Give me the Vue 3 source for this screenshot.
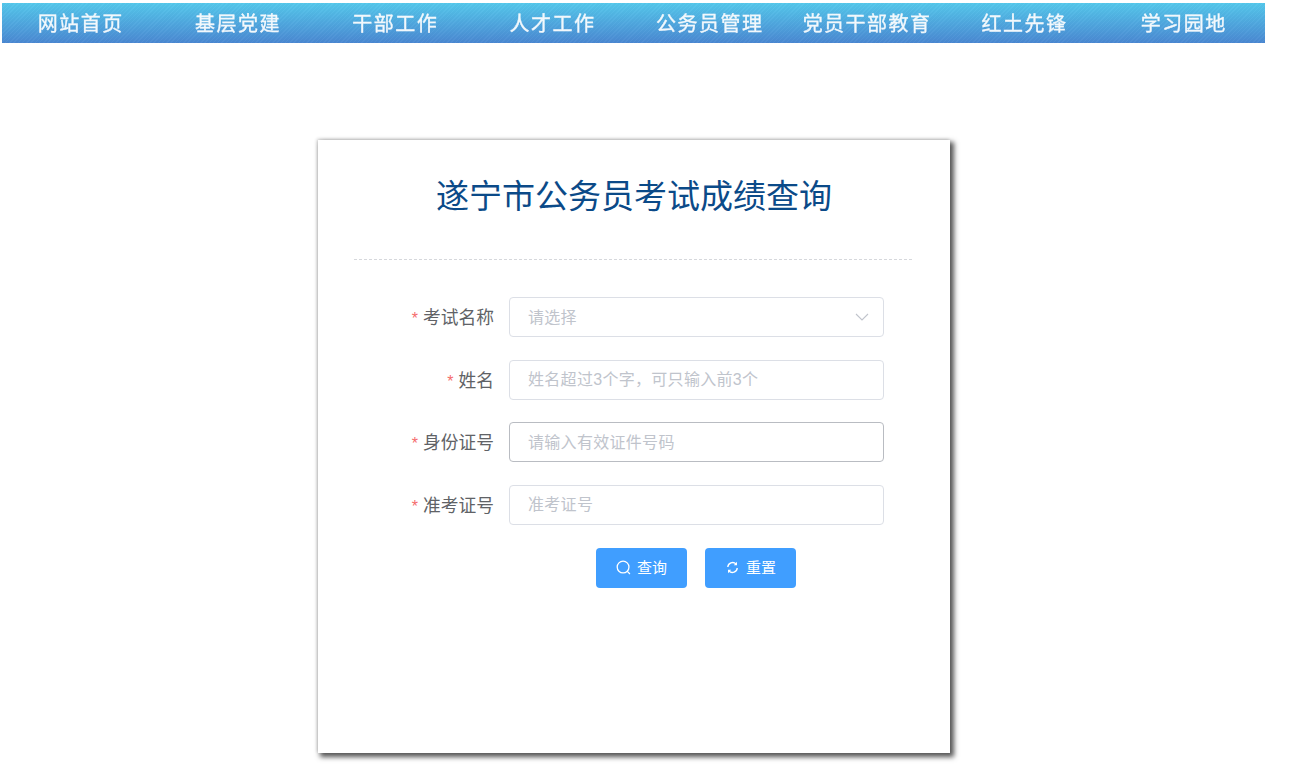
<script setup>
const navItems = ['网站首页', '基层党建', '干部工作', '人才工作', '公务员管理', '党员干部教育', '红土先锋', '学习园地']
const fields = [
  { label: '考试名称', placeholder: '请选择', select: true },
  { label: '姓名', placeholder: '姓名超过3个字，可只输入前3个' },
  { label: '身份证号', placeholder: '请输入有效证件号码', active: true },
  { label: '准考证号', placeholder: '准考证号' }
]
</script>

<template>
  <div class="page">
    <nav class="nav">
      <a v-for="item in navItems" :key="item" class="nav-item">{{ item }}</a>
    </nav>
    <main class="card">
      <h1 class="title">遂宁市公务员考试成绩查询</h1>
      <div class="divider"></div>
      <form class="form" @submit.prevent>
        <div v-for="f in fields" :key="f.label" class="row">
          <label class="label"><span class="star">*</span>{{ f.label }}</label>
          <div class="control" :class="{ active: f.active }">
            <input class="input" :placeholder="f.placeholder" :readonly="f.select" />
            <svg v-if="f.select" class="chevron" viewBox="0 0 14 8" width="14" height="8">
              <path d="M1 1l6 6 6-6" fill="none" stroke="#c0c4cc" stroke-width="1.1" />
            </svg>
          </div>
        </div>
        <div class="actions">
          <button class="btn" type="button">
            <svg viewBox="0 0 14 14" width="15" height="15">
              <circle cx="6.6" cy="6.6" r="5.5" fill="none" stroke="#fff" stroke-width="1.2" />
              <path d="M10.6 10.6l2.4 2.4" stroke="#fff" stroke-width="1.2" fill="none" />
            </svg>
            <span class="btn-text">查询</span>
          </button>
          <button class="btn" type="button">
            <svg viewBox="0 0 14 14" width="15" height="15">
              <path d="M2.6 6.6a4.5 4.5 0 0 1 7.7-2.9" fill="none" stroke="#fff" stroke-width="1.3" />
              <path d="M11.4 7.4a4.5 4.5 0 0 1-7.7 2.9" fill="none" stroke="#fff" stroke-width="1.3" />
              <path d="M11.2 1.6v3.2H8.2z" fill="#fff" />
              <path d="M2.8 12.4V9.2h3z" fill="#fff" />
            </svg>
            <span class="btn-text">重置</span>
          </button>
        </div>
      </form>
    </main>
  </div>
</template>

<style>
body { margin: 0; background: #fff; }
</style>

<style scoped>
.page {
  width: 1300px;
  height: 768px;
  overflow: hidden;
  padding-top: 3px;
  box-sizing: border-box;
  font-family: "Liberation Sans", "Noto Sans CJK SC", sans-serif;
}
.nav {
  margin-left: 2px;
  width: 1263px;
  height: 40px;
  padding-bottom: 2px;
  box-sizing: border-box;
  display: grid;
  grid-template-columns: repeat(8, 157.3px);
  align-items: center;
  background:
    repeating-linear-gradient(135deg, rgba(255,255,255,.03) 0 1px, rgba(0,0,0,.015) 1px 3px),
    linear-gradient(#54c8ec, #4a88d2);
}
.nav-item {
  text-align: center;
  color: #f2f8fc;
  font-size: 20px;
  letter-spacing: 1.5px;
  filter: blur(.5px);
  -webkit-text-stroke: .35px #f2f8fc;
}
.nav-item:last-child { transform: translateX(2px); }
.card {
  width: 632px;
  height: 613px;
  margin: 97px 0 0 318px;
  box-sizing: border-box;
  padding: 0 36px;
  background: #fff;
  box-shadow: 3px 3px 5px 1px #555, -1px -1px 3px rgba(0,0,0,.18);
}
.title {
  margin: 0;
  padding-top: 34px;
  height: 85px;
  font-size: 33px;
  line-height: 46px;
  font-weight: 400;
  text-align: center;
  color: #0b4a88;
  font-family: "Liberation Serif", "Noto Sans CJK SC", serif;
}
.divider {
  border-top: 1px dashed #d6d8dc;
  width: 558px;
}
.form {
  padding-top: 37px;
}
.row {
  display: flex;
  align-items: center;
  height: 40px;
  margin-bottom: 22.5px;
}
.label {
  width: 140px;
  text-align: right;
  padding-right: 15px;
  padding-bottom: 2px;
  font-size: 17.75px;
  color: #606266;
}
.star {
  color: #f56c6c;
  margin-right: 5px;
  font-size: 16px;
}
.control {
  position: relative;
  width: 375px;
  height: 40px;
  box-sizing: border-box;
  border: 1px solid #dcdfe6;
  border-radius: 4px;
}
.control.active { border-color: #b9bcc2; }
.input {
  width: 100%;
  height: 100%;
  box-sizing: border-box;
  padding: 1px 18px 0;
  border: 0;
  outline: 0;
  background: transparent;
  font-family: inherit;
  font-size: 16px;
  letter-spacing: .3px;
}
.input::placeholder { color: #c0c4cc; opacity: 1; }
.chevron {
  position: absolute;
  right: 14px;
  top: 15px;
}
.actions {
  display: flex;
  gap: 18px;
  padding-left: 242px;
  margin-top: 23.5px;
}
.btn {
  width: 91px;
  height: 40px;
  display: flex;
  align-items: center;
  justify-content: center;
  gap: 6px;
  border: 0;
  border-radius: 4px;
  background: #409eff;
  color: #fff;
  font-family: inherit;
  font-size: 15px;
  padding: 0 0 2px;
}
.btn-text { padding-bottom: 1px; }
</style>
